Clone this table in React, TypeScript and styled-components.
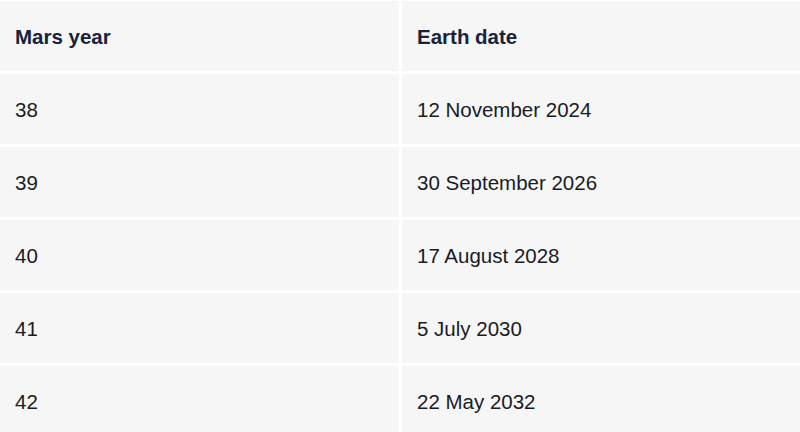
import React from 'react'
import styled, { createGlobalStyle } from 'styled-components'

const GlobalStyle = createGlobalStyle`
  html, body {
    margin: 0;
    padding: 0;
    background: #ffffff;
  }
`

type Row = {
  year: string
  date: string
}

const rows: Row[] = [
  { year: '38', date: '12 November 2024' },
  { year: '39', date: '30 September 2026' },
  { year: '40', date: '17 August 2028' },
  { year: '41', date: '5 July 2030' },
  { year: '42', date: '22 May 2032' },
]

const Table = styled.div`
  display: grid;
  grid-template-columns: 399px 1fr;
  grid-auto-rows: 70px;
  gap: 3px;
  width: 800px;
  height: 432px;
  padding-top: 1px;
  box-sizing: border-box;
  overflow: hidden;
  background: #ffffff;
  font-family: 'Liberation Sans', Arial, sans-serif;
`

const Cell = styled.div<{ $head?: boolean }>`
  display: flex;
  align-items: center;
  padding: 2px 15px 0;
  background: #f6f6f6;
  font-size: 20.5px;
  font-weight: ${(p) => (p.$head ? 700 : 400)};
  color: ${(p) => (p.$head ? '#18223a' : '#1a1c24')};
`

export default function App() {
  return (
    <>
      <GlobalStyle />
      <Table>
        <Cell $head>Mars year</Cell>
        <Cell $head>Earth date</Cell>
        {rows.map((row) => (
          <React.Fragment key={row.year}>
            <Cell>{row.year}</Cell>
            <Cell>{row.date}</Cell>
          </React.Fragment>
        ))}
      </Table>
    </>
  )
}
